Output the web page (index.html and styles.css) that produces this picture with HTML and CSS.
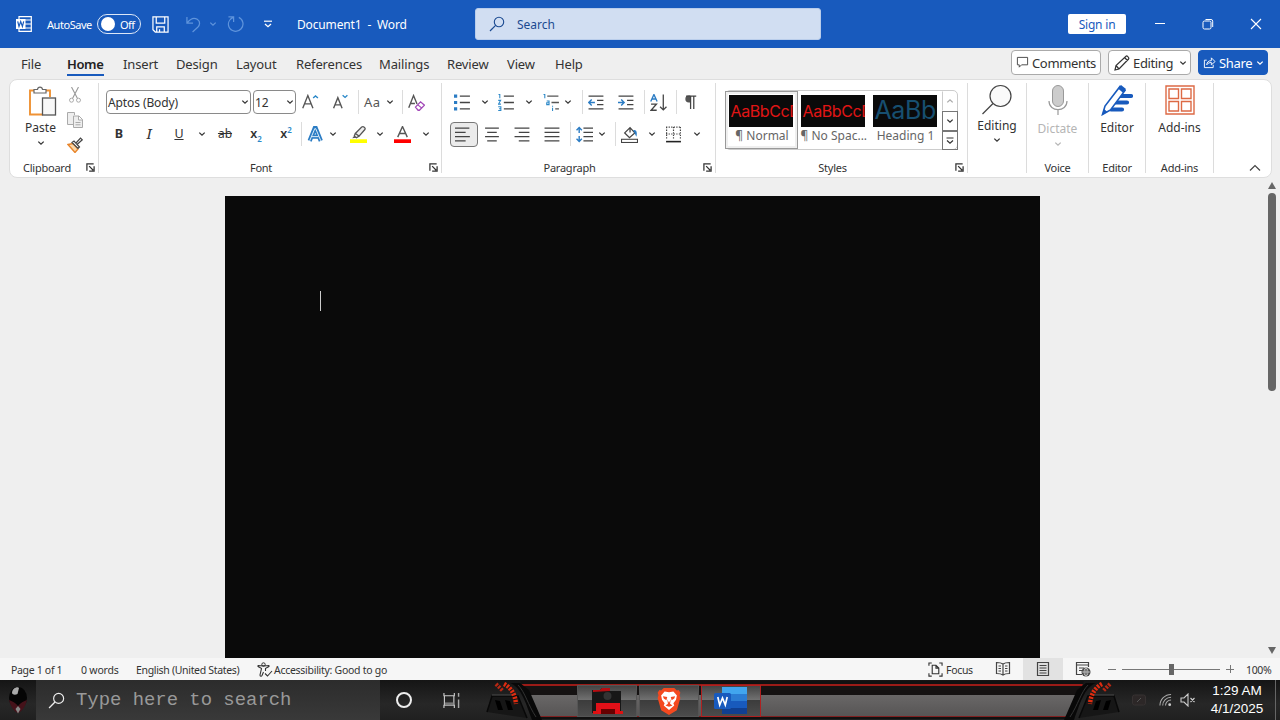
FILE: index.html
```
<!DOCTYPE html>
<html lang="en">
<head>
  <meta charset="utf-8">
  <title>Document1 - Word</title>
  <link rel="stylesheet" href="styles.css">
</head>
<body>
  <!-- shared icons -->
  <svg class="sprite">
    <symbol id="chevron" viewBox="0 0 8 8"><path d="M1.3 2.6 4 5.2 6.7 2.6" fill="none" stroke="currentColor" stroke-width="1.3"/></symbol>
    <symbol id="launcher" viewBox="0 0 10 10"><path d="M1 8.5V1h7.5M3.5 3.5l4.500 4.500M9 3.500V9H3.500" fill="none" stroke="#333" stroke-width="1.400"/></symbol>
    <symbol id="lens" viewBox="0 0 16 16"><circle cx="10" cy="6" r="4.7" fill="none" stroke="currentColor" stroke-width="1.1"/><path d="M6.6 9.4 1 15" stroke="currentColor" stroke-width="1.2"/></symbol>
  </svg>

  <header class="titlebar">
    <svg class="word-logo" viewBox="0 0 16 16"><path d="M3 3V.7h12.300v14.600H3V13M9 4h6M9 8h6M9 12h6" fill="none" stroke="#fff" stroke-width="1.200"/><rect y="3" width="9.500" height="10" fill="#fff"/><path d="M1.700 5.300 3 10.500l1.700-5 1.700 5 1.300-5.200" fill="none" stroke="#185abd" stroke-width="1.200"/></svg>
    <span class="autosave">AutoSave</span>
    <span class="toggle"><i></i>Off</span>
    <svg class="save" viewBox="0 0 18 18"><path d="M1 1h16v16H3.500L1 14.500zM4.500 1v6.500h9V1M5 17v-5.500h8V17M8 14v3" fill="none" stroke="#fff" stroke-width="1.300"/></svg>
    <svg class="undo" viewBox="0 0 16 18"><path d="M1 1v6.500h6.500M1.500 7C5 2.500 9 1.500 12 3.500c3.500 2.500 3 6 .5 8.500L7 17" fill="none" stroke="#5f94dc" stroke-width="1.300"/></svg>
    <svg class="chev undo-chev"><use href="#chevron"/></svg>
    <svg class="redo" viewBox="0 0 18 18"><path d="M1.500 1.500h5.500V7M6.500 2C2.500 4 .5 8 2 12c2 5 9 6.500 13 2 3.500-4 2-10-2.500-12" fill="none" stroke="#5f94dc" stroke-width="1.300"/></svg>
    <svg class="customize" viewBox="0 0 8 8"><path d="M0 1.200h8" stroke="#fff" stroke-width="1.200"/><path d="M1 4l3 2.700L7 4" fill="none" stroke="#fff" stroke-width="1.300"/></svg>
    <span class="doc-name">Document1&nbsp; -&nbsp; Word</span>
    <div class="search"><svg><use href="#lens"/></svg>Search</div>
    <span class="signin">Sign in</span>
    <svg class="win min" viewBox="0 0 12 12"><path d="M1 5.500h10" stroke="#fff"/></svg>
    <svg class="win max" viewBox="0 0 12 12"><rect x="1" y="3" width="8" height="8" rx="1.500" fill="none" stroke="#fff"/><path d="M3.500 1.500H9A1.700 1.700 0 0 1 10.700 3.200V9" fill="none" stroke="#fff"/></svg>
    <svg class="win" viewBox="0 0 12 12"><path d="M1 1l10 10M11 1 1 11" stroke="#fff" stroke-width="1.100"/></svg>
  </header>

  <nav class="tabs">
    <span class="t-file">File</span>
    <span class="t-home active">Home</span>
    <span class="t-insert">Insert</span>
    <span class="t-design">Design</span>
    <span class="t-layout">Layout</span>
    <span class="t-ref">References</span>
    <span class="t-mail">Mailings</span>
    <span class="t-review">Review</span>
    <span class="t-view">View</span>
    <span class="t-help">Help</span>
    <div class="actions">
      <button class="comments"><svg viewBox="0 0 14 14"><path d="M1.500 1.500h11v8H6L3.500 12V9.500h-2z" fill="none" stroke="#444"/></svg><span>Comments</span></button>
      <button class="mode"><svg viewBox="0 0 16 16"><path d="M1 15l1-4.500L12 1.200c1-.8 3.500 1.500 2.600 2.800L5 14zM10.500 2.500l3 3M2 10.500l3 3.500" fill="none" stroke="#333" stroke-width="1.200"/></svg><span>Editing</span><svg class="chev"><use href="#chevron"/></svg></button>
      <button class="share"><svg viewBox="0 0 14 14"><path d="M4 4.500H1.500v8h9.500V9.500M4 9.500c.3-3 2-4.500 5-4.500V2l4 4-4 3.500V7C7 7 5.500 7.500 4 9.500z" fill="none" stroke="#fff"/></svg><span>Share</span><svg class="chev"><use href="#chevron"/></svg></button>
    </div>
  </nav>

  <section class="ribbon">
    <div class="group clipboard">
      <div class="clip-body">
        <div class="paste">
          <svg viewBox="0 0 30 32"><path d="M8 4.500H2v24h13M18 4.500h4V11" fill="none" stroke="#ef9234" stroke-width="1.900"/><path d="M6 7V3.500h3.500C9.800.3 14.200.3 14.500 3.500H18V7z" fill="#fff" stroke="#666" stroke-width="1.200"/><rect x="14.500" y="12" width="13" height="17" fill="#f8f8f8" stroke="#555" stroke-width="1.300"/></svg>
          <span>Paste</span>
          <svg class="chev"><use href="#chevron"/></svg>
        </div>
        <div class="clip-tools">
          <svg viewBox="0 0 16 16"><path d="M4.500 0l6 11.500M11.500 0l-6 11.500" stroke="#999" stroke-width="1.100"/><circle cx="4.500" cy="13.200" r="2" fill="none" stroke="#aaa"/><circle cx="11.500" cy="13.200" r="2" fill="none" stroke="#aaa"/></svg>
          <svg viewBox="0 0 16 16"><path d="M6 12.500H.5v-12h7v2.500M6.500 4h5.500l3.500 3.500v8h-9zM11.500 4v4h4M8.500 10.500h5M8.500 12.800h5" fill="#eee" stroke="#aaa"/></svg>
          <svg viewBox="0 0 16 16"><path d="M1 7.500l5-1 5 5.500-3 3.500z" fill="#fbd7a8" stroke="#e8852b" stroke-width="1.400"/><path d="M5 5.500l2-1.500 5.500 6-1.500 1.500zM9 6l4.500-5 1.800 1.800-5 4.500" fill="#fff" stroke="#444" stroke-width="1.200"/></svg>
        </div>
      </div>
      <div class="label"><span>Clipboard</span><svg class="launch"><use href="#launcher"/></svg></div>
    </div>

    <div class="group font">
      <div class="row font-top">
        <div class="combo face">Aptos (Body)<svg class="chev"><use href="#chevron"/></svg></div>
        <div class="combo size">12<svg class="chev"><use href="#chevron"/></svg></div>
        <svg class="icon" viewBox="0 0 16 16"><path d="M.7 13.500 5.500 1.500l4.800 12M2.200 9.300h6.600" fill="none" stroke="#555" stroke-width="1.300"/><path d="M10.500 3.800 12.700 1.800 15 3.800" fill="none" stroke="#2b88c8" stroke-width="1.300"/></svg>
        <svg class="icon" viewBox="0 0 16 16"><path d="M1.500 13.500 5.500 3.500l4 10M2.800 10.200h5.400" fill="none" stroke="#555" stroke-width="1.300"/><path d="M10 1.200l2.300 2L14.500 1.200" fill="none" stroke="#2b88c8" stroke-width="1.300"/></svg>
        <i class="sep"></i>
        <span class="case">Aa</span>
        <svg class="chev"><use href="#chevron"/></svg>
        <i class="sep"></i>
        <svg class="icon" viewBox="0 0 16 16"><path d="M.7 13 5.200 1.500l3.300 8M2.500 9h4" fill="none" stroke="#555" stroke-width="1.300"/><path d="M7 12.300l4.800-5 3.700 3.200-4.800 4.800H9.500zM9 10l4 3.300" fill="#fff" stroke="#a349b8" stroke-width="1.200"/></svg>
      </div>
      <div class="row font-bottom">
        <b class="letter">B</b>
        <i class="letter italic">I</i>
        <u class="letter">U</u>
        <svg class="chev"><use href="#chevron"/></svg>
        <s class="letter strike">ab</s>
        <span class="letter script">x<sub>2</sub></span>
        <span class="letter script">x<sup>2</sup></span>
        <i class="sep"></i>
        <svg class="icon" viewBox="0 0 16 16"><path d="M2.500 14 7.300 2h.9L13 14M4.500 10h6.500" fill="none" stroke="#2b7cc4" stroke-width="4"/><path d="M2.500 14 7.300 2.500h.9L13 14M4.500 10h6.500" fill="none" stroke="#e6f2fb" stroke-width=".9"/></svg>
        <svg class="chev"><use href="#chevron"/></svg>
        <svg class="icon" viewBox="0 0 16 16"><path d="M5 7l6-6c1.500-1 4 .5 3 2.300L8.500 9.500zM5 7 4 9.500 6 11l2.500-1.500z" fill="#eee" stroke="#555" stroke-width="1.200"/><path d="M2 11.500l2-2L6 11z" fill="#555"/><path d="M0 12.500h16v3.500H0z" fill="#ff0"/></svg>
        <svg class="chev"><use href="#chevron"/></svg>
        <svg class="icon" viewBox="0 0 16 16"><path d="M3.500 10.500 8 .5l4.500 10M5 7h6" fill="none" stroke="#555" stroke-width="1.300"/><path d="M0 12.500h16v3.500H0z" fill="#f00"/></svg>
        <svg class="chev"><use href="#chevron"/></svg>
      </div>
      <div class="label"><span>Font</span><svg class="launch"><use href="#launcher"/></svg></div>
    </div>

    <div class="group paragraph">
      <div class="row para-top">
        <svg class="icon" viewBox="0 0 16 16"><path d="M0 .5h3v3H0zM0 6.500h3v3H0zM0 12.500h3v3H0z" fill="#2b7cc4"/><path d="M5.500 2H15M5.500 8H15M5.500 14H15" stroke="#444" stroke-width="1.200"/></svg>
        <svg class="chev"><use href="#chevron"/></svg>
        <svg class="icon" viewBox="0 0 16 16"><path d="M.5.500h1.200V4M.2 6h2.300L.5 9.500h2.300M.2 12h2.500v3.500H.2M1 13.800h1.500" fill="none" stroke="#2b88c8"/><path d="M5.500 2H15M5.500 8H15M5.500 14H15" stroke="#444" stroke-width="1.200"/></svg>
        <svg class="chev"><use href="#chevron"/></svg>
        <svg class="icon" viewBox="0 0 16 16"><path d="M.5.500h1.200V4M3.500 6.500h2.200V10H3.500V8.200h2M9 11v1M9 13v3" fill="none" stroke="#2b88c8"/><path d="M4 2h10.500M8 8h7M11.500 14H15" stroke="#555" stroke-width="1.200"/></svg>
        <svg class="chev"><use href="#chevron"/></svg>
        <i class="sep"></i>
        <svg class="icon" viewBox="0 0 16 16"><path d="M.5 2h14M8.500 6h6M8.500 10h6M.5 14h14" stroke="#444" stroke-width="1.200"/><path d="M6.500 8H1M3.500 5.200.700 8 3.500 10.800" fill="none" stroke="#2b7cc4" stroke-width="1.300"/></svg>
        <svg class="icon" viewBox="0 0 16 16"><path d="M.5 2h14M8.500 6h6M8.500 10h6M.5 14h14" stroke="#444" stroke-width="1.200"/><path d="M0 8h5.500M3 5.200 5.800 8 3 10.800" fill="none" stroke="#2b7cc4" stroke-width="1.300"/></svg>
        <i class="sep"></i>
        <svg class="icon" viewBox="0 0 16 16"><path d="M.7 7 3.700.5 6.700 7M1.800 4.700h3.800" fill="none" stroke="#2b7cc4" stroke-width="1.300"/><path d="M1 9.500h5L1 15.300h5.300" fill="none" stroke="#444" stroke-width="1.300"/><path d="M12.500.5V15M9.500 12l3 3 3-3" fill="none" stroke="#444" stroke-width="1.200"/></svg>
        <i class="sep"></i>
        <svg class="icon" viewBox="0 0 16 16"><path d="M11 1.500H4.500a3.200 3.200 0 0 0 0 6.500H6V1.500z" fill="#555"/><path d="M2 2h9.500M6.200 2v12M9.200 2v12" stroke="#444" stroke-width="1.200"/></svg>
      </div>
      <div class="row para-bottom">
        <span class="pressed"><svg class="icon" viewBox="0 0 16 16"><path d="M0 2h13.500M0 6h10M0 10h14M0 14h10" stroke="#444" stroke-width="1.200"/></svg></span>
        <svg class="icon" viewBox="0 0 16 16"><path d="M1 2h13M3 6h9M1 10h13M3 14h9" stroke="#444" stroke-width="1.200"/></svg>
        <svg class="icon" viewBox="0 0 16 16"><path d="M.5 2h14M4.500 6h10M.5 10h14M4.500 14h10" stroke="#444" stroke-width="1.200"/></svg>
        <svg class="icon" viewBox="0 0 16 16"><path d="M.5 2h14M.5 6h14M.5 10h14M.5 14h14" stroke="#444" stroke-width="1.200"/></svg>
        <i class="sep"></i>
        <svg class="icon" viewBox="0 0 16 16"><path d="M7 2h9M7 6h9M7 10h9M7 14h9" stroke="#444" stroke-width="1.200"/><path d="M3 1.500v5M3 9.500v5M.5 4 3 1.500 5.500 4M.5 12 3 14.500 5.500 12" fill="none" stroke="#2b7cc4" stroke-width="1.300"/></svg>
        <svg class="chev"><use href="#chevron"/></svg>
        <i class="sep"></i>
        <svg class="icon" viewBox="0 0 16 16"><path d="M3.500 6.500 8.500 1.500l4.500 5-5 4.500zM8.500 1.500V6" fill="#fff" stroke="#444" stroke-width="1.200"/><path d="M11.500 4c3-1 4 2 3 6l-2-4" fill="#2b7cc4"/><rect x=".5" y="12.500" width="15" height="3" fill="#fff" stroke="#444"/></svg>
        <svg class="chev"><use href="#chevron"/></svg>
        <svg class="icon" viewBox="0 0 16 16"><path d="M1 1h14M1 7.500h14M1.500 1v12M8 1v12M14.500 1v12" stroke="#444" stroke-width="1.100" stroke-dasharray="1.200 1.200"/><path d="M1 14.700h14" stroke="#222" stroke-width="1.500"/></svg>
        <svg class="chev"><use href="#chevron"/></svg>
      </div>
      <div class="label"><span>Paragraph</span><svg class="launch"><use href="#launcher"/></svg></div>
    </div>

    <div class="group styles">
      <div class="gallery">
        <div class="style selected"><div class="thumb">AaBbCcD</div><span>¶ Normal</span></div>
        <div class="style"><div class="thumb">AaBbCcD</div><span>¶ No Spac...</span></div>
        <div class="style heading"><div class="thumb">AaBbC</div><span>Heading 1</span></div>
        <div class="gallery-nav">
          <i class="off"><svg class="chev up"><use href="#chevron"/></svg></i>
          <i><svg class="chev"><use href="#chevron"/></svg></i>
          <i><svg viewBox="0 0 8 8"><path d="M.5 1h7M1 3.500l3 2.700 3-2.700" fill="none" stroke="#333" stroke-width="1.200"/></svg></i>
        </div>
      </div>
      <div class="label"><span>Styles</span><svg class="launch"><use href="#launcher"/></svg></div>
    </div>

    <div class="group editing">
      <svg class="big" viewBox="0 0 32 32"><circle cx="19.500" cy="12" r="10.500" fill="#fafafa" stroke="#444" stroke-width="1.200"/><path d="M12 19.500 1.500 30" stroke="#444" stroke-width="1.300"/></svg>
      <span class="big-text">Editing</span>
      <svg class="chev"><use href="#chevron"/></svg>
    </div>
    <div class="group voice">
      <svg class="big" viewBox="0 0 32 32"><rect x="10.500" y="1.500" width="11" height="21" rx="5.500" fill="#ccc" stroke="#999"/><path d="M7 17c0 11.500 18 11.500 18 0M16 26v5" fill="none" stroke="#999" stroke-width="1.200"/></svg>
      <span class="big-text">Dictate</span>
      <svg class="chev"><use href="#chevron"/></svg>
      <div class="label"><span>Voice</span></div>
    </div>
    <div class="group editor">
      <svg class="big" viewBox="0 0 32 32"><path d="M18 12h12M14 18.500h12M10 25.500h11" stroke="#185abd" stroke-width="4.200" stroke-linecap="round"/><path d="M1.500 30.500 4 22 19 2.500l5 4L9.500 26z" fill="#fff" stroke="#185abd" stroke-width="1.600"/><path d="M17 4.500 20 1l5 4-3 3.800zM1 31l2-6 3.500 3z" fill="#185abd"/></svg>
      <span class="big-text">Editor</span>
      <div class="label"><span>Editor</span></div>
    </div>
    <div class="group addins">
      <svg class="big" viewBox="0 0 32 32"><path d="M2 2h28v28H2zM5 5h9.500v9.500H5zM17.500 5H27v9.500h-9.500zM5 17.500h9.500V27H5zM17.500 17.500H27V27h-9.500z" fill="none" stroke="#dd6a45" stroke-width="1.400"/></svg>
      <span class="big-text">Add-ins</span>
      <div class="label"><span>Add-ins</span></div>
    </div>
    <svg class="collapse" viewBox="0 0 12 8"><path d="M1 6.500 6 1.500l5 5" fill="none" stroke="#444" stroke-width="1.200"/></svg>
  </section>

  <main class="workspace">
    <div class="page"><div class="caret"></div></div>
    <div class="scrollbar"><i class="arrow-up"></i><i class="thumb-bar"></i><i class="arrow-down"></i></div>
  </main>

  <footer class="status">
    <span class="s-page">Page 1 of 1</span>
    <span class="s-words">0 words</span>
    <span class="s-lang">English (United States)</span>
    <svg class="s-acc-icon" viewBox="0 0 16 16"><circle cx="6.500" cy="2.500" r="1.700" fill="none" stroke="#333"/><path d="M1 3.500c-1 1.500 3 2 3.500 3L3 13c0 1.500 1.500 1.500 2 .5L6.500 10M12 3.500c1 1.500-3 2-3.500 3V9M1 3.500c2 .5 9 .5 11 0M8 11.500l2.500 2.500L15 9" fill="none" stroke="#333" stroke-width="1.100"/></svg>
    <span class="s-acc">Accessibility: Good to go</span>
    <svg class="s-focus-icon" viewBox="0 0 16 16"><path d="M4 1H1v3M12 1h3v3M1 12v3h3M15 12v3h-3M4.500 3.500h4L11.500 6.500v6h-7zM8.500 3.500v3h3" fill="none" stroke="#333" stroke-width="1.200"/></svg>
    <span class="s-focus">Focus</span>
    <div class="view"><svg viewBox="0 0 16 16"><path d="M8 3v11M8 3C6 1.500 4 1.500 1.500 1.500v11c2.500 0 4.500 0 6.500 1.500 2-1.500 4-1.500 6.500-1.500v-11C12 1.500 10 1.500 8 3zM3.500 5H6M3.500 7.500H6M3.500 10H6M10 5h2.500M10 7.500h2.500M10 10h2.500" fill="none" stroke="#444" stroke-width="1.200"/></svg></div>
    <div class="view current"><svg viewBox="0 0 16 16"><path d="M2.500 1.500h11v13h-11zM4.500 4.500h7M4.500 7h7M4.500 9.500h7M4.500 12h7" fill="#ddd" stroke="#444" stroke-width="1.200"/></svg></div>
    <div class="view"><svg viewBox="0 0 16 16"><path d="M7 13.500H1.500v-12h12V6M1.500 4h12M4 7h5M4 9.500h3" fill="none" stroke="#444" stroke-width="1.200"/><circle cx="11" cy="11" r="4.500" fill="#444"/><path d="M7 11h8M11 7v8" stroke="#ddd" stroke-width=".7"/><ellipse cx="11" cy="11" rx="2" ry="4" fill="none" stroke="#ddd" stroke-width=".7"/></svg></div>
    <div class="zoom"><i class="minus"></i><i class="track"><i class="knob"></i></i><i class="plus"></i></div>
    <span class="s-zoom">100%</span>
  </footer>

  <footer class="taskbar">
    <div class="start"><svg viewBox="0 0 20 28"><ellipse cx="10" cy="12" rx="9" ry="11" fill="#050505"/><path d="M1 14c2 8 6 12 9 13 3-1 7-5 9-13-3 1-7 3-9 6-2-3-6-5-9-6z" fill="#45121a"/><path d="M7.500 23 10 20l2.500 3-2.500 4.500z" fill="#888"/><path d="M4 7C4 2 10 0 11 2L9.500 8c-2 1-5 1-5.500-1z" fill="#aaa"/></svg></div>
    <div class="task-search"><svg><use href="#lens"/></svg><span>Type here to search</span></div>
    <div class="cortana"><i></i></div>
    <svg class="task-view" viewBox="0 0 18 18"><path d="M1 1v3h11V1M1 17v-3h11v3M1.500 4v10M11.500 4v10" fill="none" stroke="#ccc" stroke-width="1.200"/><path d="M2 11h9v3H2z" fill="#777"/><path d="M16.500 1v4M16.500 8v9" stroke="#aaa" stroke-width="1.500"/></svg>
    <svg class="ornament" viewBox="0 0 56 40"><path d="M1 32 6 16h26l9 22" fill="#161616" stroke="#080808" stroke-width="1.500"/><path d="M6 15h21" stroke="#4a4a4a"/><path d="M9 20l5 1 3 9h-5zM19 20l5 1 3 9h-5z" fill="#000"/><path d="M18 4c6 3 11 9 12 20" fill="none" stroke="#e02c10" stroke-width="4.500" stroke-dasharray="2.200 1.200"/><path d="M10 4l7 7" stroke="#b82814" stroke-width="4" stroke-dasharray="2.200 1.200"/><path d="M24 3c10 4 14 14 22 37h10L43 10 34 3z" fill="#080808"/><path d="M32 5c7 7 10 20 18 32" fill="none" stroke="#333"/></svg>
    <div class="band">
      <div class="app"><svg viewBox="0 0 34 28"><path d="M2 3h8l2-2h8v3h11v22H2z" fill="#171717"/><path d="M3 3h7l2-2h8v3l-17 1z" fill="#b50d12"/><path d="M6 16h24v11h-5v-5H11v5H6z" fill="#e01018"/><path d="M11 22h14v5H11z" fill="#600"/><circle cx="17.500" cy="9" r="4" fill="#333"/><path d="M3 24h5v3H3zM28 24h5v3h-5z" fill="#d11"/></svg></div>
      <div class="app"><svg viewBox="0 0 28 32"><path d="M8 1h12l3 3 2-.5 2 3-1 3 1 3-4 14-9 5.500L5 26.500 1 12.500l1-3-1-3 2-3L5 4z" fill="#f4491f"/><path d="M14 6l5-.8 4 4.500-1 5-3 4 1 2.500-6 5-6-5 1-2.500-3-4-1-5 4-4.500z" fill="#fff"/><path d="M7 10.500l5 1-1 3.500-3-2zM21 10.500l-5 1 1 3.500 3-2zM12 14l2 4 2-4-.8 5L18 21l-4 1.500L10 21l2.800-2z" fill="#f4491f"/></svg></div>
      <div class="app running"><svg viewBox="0 0 34 28"><path d="M8 0h25v7H8z" fill="#41a5ee"/><path d="M8 7h25v7H8z" fill="#2b7cd3"/><path d="M8 14h25v7H8z" fill="#185abd"/><path d="M8 21h25v6H8z" fill="#103f91"/><rect x="0" y="6" width="17" height="16" rx="1.500" fill="#185abd"/><path d="M3.800 10l1.900 8L8.500 11l2.800 7 1.900-8" fill="none" stroke="#fff" stroke-width="1.700"/></svg></div>
    </div>
    <svg class="ornament flip" viewBox="0 0 56 40"><path d="M1 32 6 16h26l9 22" fill="#161616" stroke="#080808" stroke-width="1.500"/><path d="M6 15h21" stroke="#4a4a4a"/><path d="M9 20l5 1 3 9h-5zM19 20l5 1 3 9h-5z" fill="#000"/><path d="M18 4c6 3 11 9 12 20" fill="none" stroke="#e02c10" stroke-width="4.500" stroke-dasharray="2.200 1.200"/><path d="M10 4l7 7" stroke="#b82814" stroke-width="4" stroke-dasharray="2.200 1.200"/><path d="M24 3c10 4 14 14 22 37h10L43 10 34 3z" fill="#080808"/><path d="M32 5c7 7 10 20 18 32" fill="none" stroke="#333"/></svg>
    <div class="tray">
      <svg class="chip" viewBox="0 0 14 12"><rect x=".5" y="1" width="13" height="10" rx="2" fill="#2c2727" stroke="#373232"/><path d="M5 8l4-4" stroke="#555"/></svg>
      <svg class="wifi" viewBox="0 0 14 14"><path d="M1 13A12 12 0 0 1 13 1M4 13a9 9 0 0 1 9-9M7 13a6 6 0 0 1 6-6" fill="none" stroke="#aaa" stroke-width="1.100"/><circle cx="11.500" cy="12" r="1.500" fill="#ccc"/></svg>
      <svg class="mute" viewBox="0 0 16 14"><path d="M1 5h3l4-4v12L4 9H1zM10.500 5l4 4M14.500 5l-4 4" fill="none" stroke="#ccc" stroke-width="1.100"/></svg>
      <div class="clock">1:29 AM<br>4/1/2025</div>
      <i class="show-desktop"></i>
    </div>
  </footer>
</body>
</html>
```

FILE: styles.css
```
* {
  box-sizing: border-box;
}

body {
  margin: 0;
  width: 1280px;
  height: 720px;
  overflow: hidden;
  background: #efefef;
  color: #333;
  font-family: "Noto Sans", "Open Sans", sans-serif;
  font-size: 12px;
  white-space: nowrap;
}

svg {
  display: block;
  flex: none;
}

.sprite {
  position: absolute;
  width: 0;
  height: 0;
}

.chev {
  width: 8px;
  height: 8px;
}

/* Title bar */
.titlebar {
  display: flex;
  align-items: center;
  height: 48px;
  padding-left: 16px;
  background: #185abd;
  color: #fff;
}

.word-logo {
  width: 16px;
  height: 16px;
  margin-right: 15px;
}

.autosave {
  width: 50px;
  font-size: 11px;
  letter-spacing: -0.45px;
}

.toggle {
  display: flex;
  align-items: center;
  gap: 5px;
  width: 44px;
  height: 20px;
  padding-left: 3px;
  border: 1px solid #dce7f7;
  border-radius: 10px;
  font-size: 11px;
  letter-spacing: -0.5px;
}

.toggle i {
  width: 14px;
  height: 14px;
  border-radius: 50%;
  background: #fff;
}

.save {
  width: 17px;
  height: 17px;
  margin-left: 11px;
}

.undo {
  width: 15px;
  height: 17px;
  margin-left: 17px;
}

.undo-chev {
  margin-left: 8px;
  color: #5f94dc;
}

.redo {
  width: 17px;
  height: 18px;
  margin-left: 10px;
}

.customize {
  width: 8px;
  height: 8px;
  margin-left: 20px;
}

.doc-name {
  width: 178px;
  margin-left: 25px;
  letter-spacing: -0.15px;
}

.search {
  display: flex;
  align-items: center;
  width: 346px;
  height: 32px;
  padding-left: 13px;
  border: 1px solid #b9cdeb;
  border-radius: 3px;
  background: #d1def2;
  color: #1b4a91;
  font-size: 12px;
}

.search svg {
  width: 16px;
  height: 16px;
  margin-right: 12px;
}

.signin {
  width: 58px;
  height: 20px;
  margin: 0 28px 0 auto;
  border-radius: 2px;
  background: #fff;
  color: #185abd;
  line-height: 21px;
  letter-spacing: -0.2px;
  text-align: center;
}

.win {
  width: 12px;
  height: 12px;
  margin-right: 36px;
}

.win:last-child {
  margin-right: 18px;
}

/* Tabs */
.tabs {
  display: flex;
  align-items: center;
  height: 31px;
  padding-left: 21px;
  font-size: 13px;
  letter-spacing: -0.15px;
}

.tabs > span {
  height: 24px;
  line-height: 24px;
}

.t-file { width: 46px; }
.t-insert { width: 53px; }
.t-design { width: 60px; }
.t-layout { width: 60px; }
.t-ref { width: 83px; }
.t-mail { width: 68px; }
.t-review { width: 60px; }
.t-view { width: 48px; }

.t-home {
  width: 37px;
  margin-right: 19px;
}

.tabs .active {
  border-bottom: 2px solid #185abd;
  color: #222;
  font-weight: 600;
  letter-spacing: -0.4px;
}

.actions {
  display: flex;
  gap: 7px;
  margin: -2px 12px 0 auto;
}

.actions button {
  display: flex;
  align-items: center;
  height: 25px;
  padding: 0 3px 0 5px;
  border: 1px solid #aaa;
  border-radius: 4px;
  background: #fff;
  color: #333;
  font: 13px "Noto Sans", sans-serif;
  letter-spacing: -0.35px;
}

.actions svg {
  width: 13px;
  height: 13px;
  margin-right: 3px;
}

.actions .chev {
  width: 8px;
  height: 8px;
  margin: 0 0 0 auto;
}

.actions .comments {
  width: 90px;
  padding: 0 4px;
}

.mode {
  width: 83px;
}

.actions .mode > svg:first-child {
  width: 16px;
  height: 16px;
}

.actions .share {
  width: 70px;
  padding: 0 3px 0 4px;
  border-color: #185abd;
  background: #185abd;
  color: #fff;
}

/* Ribbon */
.ribbon {
  display: flex;
  width: 1263px;
  height: 99px;
  margin-left: 9px;
  padding-top: 3px;
  border: 1px solid #dedede;
  border-radius: 8px;
  background: #fff;
}

.group {
  display: grid;
  grid-template-rows: 32px 32px 1fr;
  height: 90px;
  border-right: 1px solid #dcdcdc;
}

.clipboard { width: 89px; }
.font { width: 343px; }
.paragraph { width: 274px; }
.styles { width: 252px; }

.clipboard {
  padding-top: 2px;
}

.font,
.paragraph {
  padding-top: 3px;
}

.label {
  display: flex;
  grid-row: 3;
  align-items: center;
  align-self: end;
  height: 15px;
  margin-bottom: -2px;
  font-size: 11px;
  letter-spacing: -0.25px;
}

.label span {
  flex: 1;
  text-align: center;
}

.launch {
  width: 9px;
  height: 9px;
  margin: 0 3px 0 6px;
}

.clipboard .launch {
  margin-left: 2px;
}

.row {
  display: grid;
  align-items: center;
  justify-items: start;
}

.icon {
  width: 17px;
  height: 17px;
}

.sep {
  width: 1px;
  height: 24px;
  background: #dcdcdc;
}

.clip-body {
  display: grid;
  grid-row: 1 / 3;
  grid-template-columns: 57px 1fr;
}

.paste {
  display: flex;
  flex-direction: column;
  align-items: center;
  padding: 1px 0 0 4px;
}

.paste svg:first-child {
  width: 30px;
  height: 32px;
  margin: 0 0 1px 4px;
}

.paste .chev {
  margin-top: 3px;
}

.clip-tools {
  display: grid;
  gap: 9px;
  align-content: start;
  padding: 2px 0 0;
}

.clip-tools svg {
  width: 16px;
  height: 16px;
}

.font-top {
  grid-template-columns: 147px 49px 30px 26px 6px 22px 16px 6px 20px;
  padding-left: 7px;
}

.combo {
  display: flex;
  align-items: center;
  height: 24px;
  padding: 0 1px;
  border: 1px solid #8a8a8a;
  border-radius: 4px;
  letter-spacing: -0.1px;
}

.combo .chev {
  margin-left: auto;
}

.face { width: 145px; }
.size { width: 43px; }

.case {
  color: #555;
  font-size: 13px;
  letter-spacing: 0.4px;
}

.font-bottom {
  grid-template-columns: 30px 30px 29px 17px 31px 30px 25px 6px 22px 21px 26px 18px 28px 10px;
  padding-left: 10px;
}

.letter {
  width: 20px;
  font-size: 12.5px;
  line-height: 18px;
  text-align: center;
}

.italic {
  font-family: "Noto Serif", "Liberation Serif", serif;
  font-size: 14px;
}

.strike {
  font-size: 12px;
}

.script {
  font-weight: 600;
}

.script sub,
.script sup {
  color: #2b88c8;
  font-size: 8px;
  line-height: 0;
}

.para-top {
  grid-template-columns: 27px 17px 27px 18px 21px 18px 6px 30px 26px 6px 26px 8px 18px;
  padding-left: 12px;
}

.para-bottom {
  grid-template-columns: 34px 30px 30px 26px 6px 22px 17px 6px 27px 17px 28px 8px;
  padding-left: 8px;
}

.pressed {
  display: grid;
  place-items: center;
  width: 28px;
  height: 25px;
  padding-right: 1px;
  border: 1px solid #777;
  border-radius: 4px;
  background: #ebebeb;
}

/* Style gallery */
.gallery {
  display: grid;
  grid-row: 1 / 3;
  grid-template-columns: 72px 72px 72px 16px;
  width: 233px;
  height: 60px;
  margin: 7px 0 0 8.5px;
  border: 1px solid #ccc;
  border-radius: 5px;
}

.style {
  padding: 4px 5px 4px 3px;
  color: #666;
  text-align: center;
}

.style span {
  display: block;
  margin-right: -2px;
}

.style.selected {
  height: 58px;
  margin-left: -1px;
  padding: 2px;
  border: 1.5px solid #999;
  box-shadow: inset 0 0 0 2px #efefef;
}

.style.selected .thumb {
  margin: 1px 2px 0 1px;
}

.thumb {
  width: 64px;
  height: 32px;
  overflow: hidden;
  background: #0a0a0a;
  color: #e01515;
  font: 16px/33px Inter, sans-serif;
  letter-spacing: -0.4px;
  text-align: left;
  text-indent: 2px;
}

.heading .thumb {
  color: #174f70;
  font-size: 25px;
  line-height: 31px;
}

.gallery-nav {
  display: grid;
  grid-template-rows: 20px 20px 19px;
}

.gallery-nav i {
  display: grid;
  place-items: center;
  border: 1px solid #777;
}

.gallery-nav .off {
  border-color: transparent transparent transparent #ccc;
  color: #aaa;
}

.gallery-nav svg {
  width: 8px;
  height: 8px;
}

.up {
  transform: rotate(180deg);
}

.editing,
.voice,
.editor,
.addins {
  grid-template-rows: 33px 22px 1fr 15px;
  justify-items: center;
}

.editing { width: 59px; }
.voice { width: 62px; }
.editor { width: 57px; }
.addins { width: 68px; }

.editing .label,
.voice .label,
.editor .label,
.addins .label {
  grid-row: 4;
}

.big {
  width: 32px;
  height: 32px;
  margin-top: 1px;
}

.big-text {
  font-size: 12px;
  line-height: 23px;
}

.editing .big-text {
  line-height: 19px;
}

.editing .chev {
  margin-top: -2px;
}

.voice .big-text,
.voice .chev {
  color: #b5b5b5;
}

.voice .big-text {
  line-height: 25px;
}

.voice .chev {
  margin-top: 2px;
}

.collapse {
  align-self: end;
  width: 12px;
  height: 8px;
  margin: 0 0 5px 35px;
}

/* Document area */
.workspace {
  display: flex;
  justify-content: space-between;
  height: 480px;
  padding: 18px 0 0 225px;
}

.page {
  width: 815px;
  padding: 95px;
  background: #0a0a0a;
}

.caret {
  width: 1px;
  height: 20px;
  background: #ccc;
}

.scrollbar {
  display: flex;
  flex-direction: column;
  align-items: center;
  width: 16px;
  margin-top: -14px;
}

.arrow-up,
.arrow-down {
  border: 4.5px solid transparent;
  border-top-width: 0;
  border-bottom: 7px solid #666;
}

.thumb-bar {
  width: 8px;
  height: 198px;
  margin-top: 4px;
  border-radius: 4px;
  background: #666;
}

.arrow-down {
  margin: auto 0 4px;
  transform: rotate(180deg);
}

/* Status bar */
.status {
  display: flex;
  align-items: center;
  height: 22px;
  padding: 1px 0 0 11px;
  background: #f6f6f6;
  font-size: 10.5px;
  letter-spacing: -0.32px;
}

.s-page { width: 70px; }
.s-words { width: 55px; letter-spacing: -0.2px; }
.s-lang { width: 121px; }
.s-acc { width: 654px; letter-spacing: -0.28px; }

.s-acc-icon {
  width: 16px;
  height: 16px;
  margin-right: 1px;
}

.s-focus-icon {
  width: 15px;
  height: 15px;
  margin-right: 3px;
}

.s-focus {
  width: 37px;
}

.view {
  display: grid;
  place-items: center;
  width: 40px;
  height: 22px;
  margin-top: -1px;
}

.view svg {
  width: 16px;
  height: 16px;
}

.current {
  background: #e2e2e2;
}

.zoom {
  display: flex;
  align-items: center;
  gap: 6px;
  margin: -1px 12px 0 5px;
}

.zoom .minus,
.zoom .plus {
  width: 8px;
  height: 1px;
  background: #777;
}

.zoom .plus {
  height: 8px;
  background: linear-gradient(#777, #777) center / 8px 1px no-repeat, linear-gradient(#777, #777) center / 1px 8px no-repeat;
}

.track {
  display: flex;
  align-items: center;
  justify-content: center;
  width: 98px;
  height: 1px;
  background: #777;
}

.knob {
  flex: none;
  width: 5px;
  height: 11px;
  background: #666;
}

/* Taskbar */
.taskbar {
  display: flex;
  align-items: center;
  height: 40px;
  background: linear-gradient(#151515, #272727 60%, #202020);
}

.taskbar > * {
  flex: none;
}

.start {
  display: grid;
  place-items: center;
  width: 36px;
}

.start svg {
  width: 20px;
  height: 28px;
}

.task-search {
  display: flex;
  align-items: center;
  width: 344px;
  height: 40px;
  padding-left: 12px;
  background: linear-gradient(#2c2c2c, #393939);
  color: #999;
  font: 18.9px "Liberation Mono", monospace;
}

.task-search svg {
  width: 17px;
  height: 17px;
  margin-right: 11px;
  color: #eee;
}

.cortana {
  display: grid;
  place-items: center;
  width: 48px;
}

.cortana i {
  width: 16px;
  height: 16px;
  border: 2px solid #eee;
  border-radius: 50%;
}

.task-view {
  width: 17px;
  height: 17px;
  margin-left: 15px;
}

.ornament {
  z-index: 1;
  width: 56px;
  height: 40px;
  margin-left: 26px;
}

.band {
  display: flex;
  gap: 2px;
  width: 564px;
  height: 38px;
  margin-left: -22px;
  padding-left: 57px;
  background: linear-gradient(#111 3px, #9b1b17 3px, #9b1b17 5px, #151212 5px, #151212 14px, #696767 14px, #575555 35px, #802020 35px, #802020 36px, #111 36px);
  clip-path: polygon(0 0, 100% 0, 550px 100%, 18px 100%);
}

.app {
  display: grid;
  place-items: center;
  width: 60px;
  height: 32px;
  margin-top: 4px;
  border: 1px solid #555;
  background: linear-gradient(#444, #707070 45%, #3c3c3c 48%, #4c4c4c);
}

.app svg {
  width: 34px;
  height: 28px;
}

.app.running {
  border-color: #b02020;
}

.ornament.flip {
  margin-left: -20px;
  transform: scaleX(-1);
}

.tray {
  display: flex;
  align-items: center;
  margin-left: 12px;
}

.chip {
  width: 14px;
  height: 12px;
}

.wifi {
  width: 13px;
  height: 14px;
  margin-left: 13px;
}

.mute {
  width: 16px;
  height: 14px;
  margin-left: 8px;
}

.clock {
  width: 60px;
  margin-left: 11px;
  color: #fff;
  font: 13.5px/18px "Liberation Sans", sans-serif;
  text-align: center;
}

.show-desktop {
  width: 1px;
  height: 40px;
  margin-left: 8px;
  background: #666;
}
```
